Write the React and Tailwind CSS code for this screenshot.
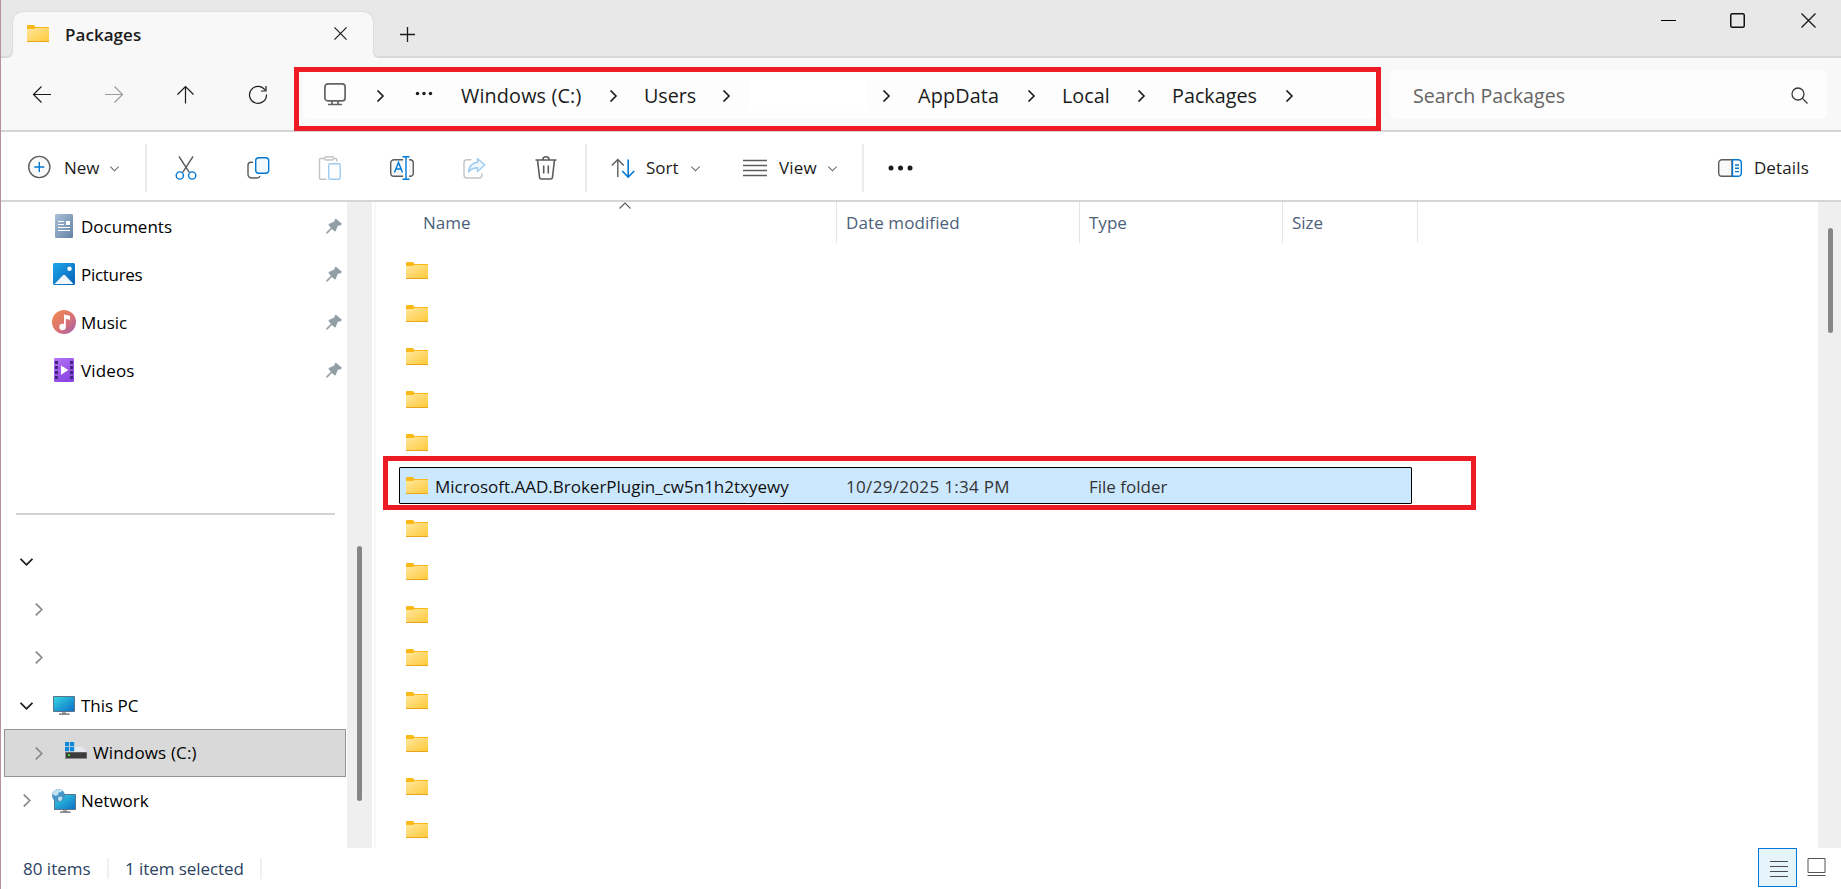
import React, { useState } from 'react'

const NAV_ICONS = [
  { id: 'back',    cls: 'text-[#1b1b1b]', d: 'M21 11.500H3.500M11.500 3.500 3.500 11.500l8 8' },
  { id: 'forward', cls: 'text-[#9b9b9b]', d: 'M3 11.500h17.500M12.500 3.500 20.500 11.500l-8 8' },
  { id: 'up',      cls: 'text-[#1b1b1b]', d: 'M11.500 20.500V3.500M3.500 11.500 11.500 3.500l8 8' },
  { id: 'refresh', cls: 'text-[#1b1b1b]', d: 'M19 7A8.500 8.500 0 1 0 20.500 11.500M20 3v5h-5' },
]

const PLACES = [
  { id: 'documents', label: 'Documents', Icon: DocumentsIcon, cls: 'tracking-normal' },
  { id: 'pictures',  label: 'Pictures',  Icon: PicturesIcon,  cls: 'tracking-[-0.300px]' },
  { id: 'music',     label: 'Music',     Icon: MusicIcon,     cls: 'tracking-normal' },
  { id: 'videos',    label: 'Videos',    Icon: VideosIcon,    cls: 'tracking-[0.150px]' },
]

const SELECTED = 5
const FILES = Array.from({ length: 14 }, (_, i) => (
  i === SELECTED
    ? { id: i, name: 'Microsoft.AAD.BrokerPlugin_cw5n1h2txyewy', modified: '10/29/2025 1:34 PM', type: 'File folder' }
    : { id: i, name: '', modified: '', type: '' }
))

function Chevron({ dir = 'right', size = 12, width = 1.6, className = '' }) {
  const paths = {
    right: 'M3.500 0.500 9 6 3.500 11.500',
    down:  'M0.500 3.500 6 9l5.500-5.500',
    up:    'M0.500 8.500 6 3l5.500 5.500',
  }
  return (
    <svg width={size} height={size} viewBox="0 0 12 12" fill="none" stroke="currentColor" strokeWidth={width} className={`shrink-0 ${className}`}>
      <path d={paths[dir]} />
    </svg>
  )
}

function Cross({ size }) {
  return (
    <svg width={size} height={size} viewBox="0 0 15 15" fill="none" stroke="#1b1b1b" strokeWidth="1.4">
      <path d="M0.500 0.500l14 14M14.500 0.500l-14 14" />
    </svg>
  )
}

function FolderIcon({ className = '' }) {
  return (
    <svg width="22" height="17" viewBox="0 0 22 17" className={`shrink-0 ${className}`}>
      <defs>
        <linearGradient id="folder" x1="0" y1="0" x2="1" y2="1">
          <stop offset="0" stopColor="#ffe79f" />
          <stop offset="1" stopColor="#ffca3a" />
        </linearGradient>
      </defs>
      <path d="M0 1a1 1 0 0 1 1-1h6l1.500 2H22v3H0z" fill="#fbb917" />
      <path d="M0 4h7l1.500-1H22v13H0z" fill="url(#folder)" />
      <path d="M0 16h22v.4a.6.6 0 0 1-.6.6H.6a.6.6 0 0 1-.6-.6z" fill="#e8a51d" />
    </svg>
  )
}

function DocumentsIcon() {
  return (
    <svg width="24" height="24" viewBox="0 0 24 24">
      <defs>
        <linearGradient id="doc" x1="0" y1="0" x2="1" y2="1">
          <stop offset="0" stopColor="#a9c0d8" />
          <stop offset="1" stopColor="#6483a5" />
        </linearGradient>
      </defs>
      <rect x="3" width="18" height="24" rx="1.300" fill="url(#doc)" />
      <path d="M6 7.500h6M6 10.500h6M6 13.500h12M6 16.500h12" stroke="#fff" strokeWidth="1" />
      <rect x="14" y="7" width="4" height="4" fill="#fff" />
    </svg>
  )
}

function PicturesIcon() {
  return (
    <svg width="24" height="24" viewBox="0 0 24 24">
      <defs>
        <linearGradient id="pic" x1="0" y1="0" x2="1" y2="1">
          <stop offset="0" stopColor="#1ea7ea" />
          <stop offset="1" stopColor="#0560b6" />
        </linearGradient>
      </defs>
      <rect x="1" y="1" width="22" height="22" rx="1.500" fill="url(#pic)" />
      <path d="M2.500 22 11 13.200a1.500 1.500 0 0 1 2.100 0L21.500 22z" fill="#f1f6fc" />
      <circle cx="17.500" cy="6.700" r="2.200" fill="#fff" />
    </svg>
  )
}

function MusicIcon() {
  return (
    <svg width="24" height="24" viewBox="0 0 24 24">
      <defs>
        <linearGradient id="music" x1="0" y1="0.100" x2="0.900" y2="1">
          <stop offset="0" stopColor="#f28a50" />
          <stop offset="0.550" stopColor="#d97272" />
          <stop offset="1" stopColor="#a862ae" />
        </linearGradient>
      </defs>
      <circle cx="12" cy="12" r="12" fill="url(#music)" />
      <path d="M12 4.500l6 1.300v4l-4.200-.9V17h-1.800z" fill="#fff" />
      <circle cx="10.500" cy="17" r="3.200" fill="#fff" />
    </svg>
  )
}

function VideosIcon() {
  return (
    <svg width="24" height="24" viewBox="0 0 24 24">
      <defs>
        <linearGradient id="video" x1="0" y1="0" x2="0.600" y2="1">
          <stop offset="0" stopColor="#b574f5" />
          <stop offset="1" stopColor="#8a44e2" />
        </linearGradient>
      </defs>
      <rect x="2" width="20" height="24" rx="1.300" fill="url(#video)" />
      {[3, 8, 13, 18].map((y) => (
        <g key={y} fill="#40277c">
          <rect x="3" y={y} width="3" height="3" />
          <rect x="18" y={y} width="3" height="3" />
        </g>
      ))}
      <path d="M9 7.500 16.300 12 9 16.800z" fill="#fff" />
    </svg>
  )
}

function Monitor() {
  return (
    <>
      <defs>
        <linearGradient id="screen" x1="0" y1="0" x2="1" y2="1">
          <stop offset="0" stopColor="#35d6e3" />
          <stop offset="1" stopColor="#0d6fc7" />
        </linearGradient>
      </defs>
      <rect x="0" y="0" width="22" height="16" rx="0.800" fill="#59748a" />
      <rect x="1" y="1" width="20" height="14" fill="url(#screen)" />
      <path d="M9 16h4v2H9z" fill="#a6acb0" />
      <path d="M6 17.500h10.500v1.200H6z" fill="#54595e" />
    </>
  )
}

function ThisPcIcon() {
  return (
    <svg width="24" height="24" viewBox="0 0 24 24">
      <g transform="translate(1 2)"><Monitor /></g>
    </svg>
  )
}

function NetworkIcon() {
  return (
    <svg width="24" height="24" viewBox="0 0 24 24">
      <g transform="translate(2 5)"><Monitor /></g>
      <circle cx="6.500" cy="6.500" r="6.500" fill="#4893c4" />
      <path d="M2 2c2.500-2.300 6-2.300 8.500-.8L9 3.500 7 3 6 6 3.500 7 .5 5zM6.500 7.500l4 .5-.8 3-2 1.500-1.700-2z" fill="#c2e2f1" />
    </svg>
  )
}

function DriveIcon() {
  return (
    <svg width="22" height="18" viewBox="0 0 22 18">
      <path d="M9 5h9l4 6H9z" fill="#e4e7ec" />
      <path d="M0 10h22v7H0z" fill="#8a8a8a" />
      <path d="M1 10.500h20.500V16H1z" fill="#3d3d3d" />
      <rect x="3" y="12" width="2" height="2" fill="#3ddc2c" />
      <path d="M0 0h4.200v4.200H0zM5 0h4.200v4.200H5zM0 5h4.200v4.200H0zM5 5h4.200v4.200H5z" fill="#1089dd" />
    </svg>
  )
}

function PinIcon() {
  return (
    <svg width="16" height="16" viewBox="0 0 16 16" fill="#929da4">
      <path d="M9.500.5 15.700 5.400 15 7.200 11.800 7.800 9.700 13.200 8.400 13.200 5.800 10.900 1.600 15.500H.3V14.300L4.900 9.700 2.700 7.200V6L8 3.800z" />
    </svg>
  )
}

function Stroke24({ children, width = 1.4, className = '' }) {
  return (
    <svg width="24" height="24" viewBox="0 0 24 24" fill="none" stroke="#5c5c5c" strokeWidth={width} className={`shrink-0 ${className}`}>
      {children}
    </svg>
  )
}

function TitleBar() {
  return (
    <header className="h-[58px] shrink-0 bg-[#f8f8f8]">
      <div className="flex h-[48px] bg-[#e8e8e8] pl-[11px]">
        <div className="mt-[11px] flex w-[362px] rounded-t-[11px] border-x border-t border-[#dedede] bg-[#f8f8f8] pl-[14px]">
          <FolderIcon className="mt-[13px]" />
          <span className="mt-[12px] ml-[16px] w-[78px] text-[17px] leading-[22px] font-semibold tracking-[0.050px] text-[#1b1b1b]">Packages</span>
          <button className="mt-[15px] ml-[191px] h-[13px] w-[13px]"><Cross size={13} /></button>
        </div>
        <button className="mt-[27px] ml-[26px] h-[15px] w-[15px]">
          <svg width="15" height="15" viewBox="0 0 15 15" stroke="#1b1b1b" strokeWidth="1.300">
            <path d="M0 7.500h15M7.500 0v15" />
          </svg>
        </button>
        <div className="ml-auto flex h-[41px] items-center">
          <button className="flex w-[61px] justify-center"><span className="h-px w-[15px] bg-black" /></button>
          <button className="flex w-[77px] justify-center">
            <svg width="15" height="15" viewBox="0 0 15 15" fill="none" stroke="#111" strokeWidth="1.500">
              <rect x="0.750" y="0.750" width="13.500" height="13.500" rx="1.500" />
            </svg>
          </button>
          <button className="flex w-[65px] justify-center"><Cross size={15} /></button>
        </div>
      </div>
      {/* foot of the tab, flaring into the bar below */}
      <div className="flex h-[10px]">
        <div className="w-[12px] rounded-br-[6px] border-r border-b-2 border-[#d9d9d9] bg-[#e8e8e8]" />
        <div className="w-[360px]" />
        <div className="flex-1 rounded-bl-[6px] border-b-2 border-l border-[#d9d9d9] bg-[#e8e8e8]" />
      </div>
    </header>
  )
}

function Crumbs() {
  return (
    <div className="relative flex h-[49px] w-[1074px] items-center rounded-[7px] bg-[#fdfdfd] pl-[21px] text-[19.800px] text-[#1b1b1b]">
      <svg width="22" height="23" viewBox="0 0 22 23" fill="none" stroke="#636363" strokeWidth="1.700" className="shrink-0">
        <rect x="0.900" y="0.900" width="20.200" height="17" rx="3" />
        <path d="M8 18v3.500M14 18v3.500M4 21.500h14" />
      </svg>
      <span className="flex w-[68px] justify-center pt-[2px]"><Chevron /></span>
      <svg width="20" height="5" viewBox="0 0 20 5" fill="#1b1b1b" className="-mt-[2px]">
        <circle cx="3.500" cy="2.500" r="1.700" /><circle cx="10" cy="2.500" r="1.700" /><circle cx="16.500" cy="2.500" r="1.700" />
      </svg>
      <span className="ml-[27px] w-[121px] pt-[2px] tracking-[0.150px] whitespace-nowrap">Windows (C:)</span>
      <span className="flex w-[62px] justify-center pt-[2px]"><Chevron /></span>
      <span className="w-[58px] pt-[2px] tracking-[-0.100px]">Users</span>
      <span className="flex w-[48px] justify-center pt-[2px]"><Chevron /></span>
      <span className="h-[32px] w-[116px] bg-white" />
      <span className="flex w-[39px] justify-center pt-[2px]"><Chevron /></span>
      <span className="ml-[13px] w-[81px] pt-[2px] tracking-[0.150px]">AppData</span>
      <span className="flex w-[63px] justify-center pt-[2px]"><Chevron /></span>
      <span className="w-[48px] pt-[2px]">Local</span>
      <span className="flex w-[62px] justify-center pt-[2px]"><Chevron /></span>
      <span className="w-[86px] pt-[2px]">Packages</span>
      <span className="flex w-[62px] justify-center pt-[2px]"><Chevron /></span>
      <div className="absolute -top-[3px] -left-[9px] h-[64px] w-[1087px] border-[5px] border-[#ed1c24]" />
    </div>
  )
}

function AddressBar() {
  return (
    <div className="flex h-[74px] shrink-0 items-start border-b-2 border-[#d5d5d5] bg-[#f8f8f8] pt-[12px] pl-[5px]">
      <nav className="flex h-[49px] items-center">
        {NAV_ICONS.map((n) => (
          <button key={n.id} className={`flex w-[72px] justify-center ${n.cls}`}>
            <svg width="24" height="24" viewBox="0 0 24 24" fill="none" stroke="currentColor" strokeWidth="1.200">
              <path d={n.d} />
            </svg>
          </button>
        ))}
      </nav>
      <div className="ml-[9px]"><Crumbs /></div>
      <div className="ml-[13px] flex h-[49px] w-[437px] items-center justify-between rounded-[7px] bg-[#fdfdfd] pt-[2px] pr-[19px] pl-[23px]">
        <span className="text-[19.600px] tracking-[0.050px] text-[#646464]">Search Packages</span>
        <svg width="17" height="17" viewBox="0 0 17 17" fill="none" stroke="#3a3a3a" strokeWidth="1.300">
          <circle cx="7" cy="7" r="6" /><path d="M11.400 11.400 16.500 16.500" />
        </svg>
      </div>
    </div>
  )
}

function Toolbar() {
  return (
    <div className="flex h-[70px] shrink-0 items-center border-b-2 border-[#d5d5d5] bg-white pt-[4px] text-[17px] text-[#1b1b1b]">
      <button className="flex w-[144px] items-center pl-[26px] text-left">
        <Stroke24 className="-mt-[2px]">
          <circle cx="12.300" cy="12" r="10.600" fill="#f9f9f9" />
          <path d="M12.300 7v10M7.300 12h10" stroke="#0078d4" />
        </Stroke24>
        <span className="ml-[13px] w-[46px]">New</span>
        <Chevron dir="down" size={9} width={1.4} className="text-[#666]" />
      </button>
      <div className="h-[48px] w-[2px] bg-[#ececec]" />

      <div className="flex w-[436px] pl-[3px]">
        <button className="flex w-[72px] justify-center">
          <Stroke24>
            <path d="M5 .5 15.300 16.300M19 .5 8.700 16.300" />
            <circle cx="5.800" cy="19.500" r="3.600" stroke="#0078d4" />
            <circle cx="18.200" cy="19.500" r="3.600" stroke="#0078d4" />
          </Stroke24>
        </button>
        <button className="flex w-[72px] justify-center">
          <Stroke24>
            <path d="M7 6.200H5a3 3 0 0 0-3 3v9.300a3.500 3.500 0 0 0 3.500 3.500H11a3 3 0 0 0 3-2" />
            <rect x="9.700" y="1.800" width="13" height="15.500" rx="3" stroke="#0078d4" fill="#f4f9fd" />
          </Stroke24>
        </button>
        <button className="flex w-[72px] justify-center">
          <Stroke24>
            <g stroke="#c3c3c3">
              <path d="M6.500 2.500H2.700a1.200 1.200 0 0 0-1.200 1.200V22a1.200 1.200 0 0 0 1.200 1.200H8.500M15.500 2.500h2a1.200 1.200 0 0 1 1.200 1.200v1.800" />
              <rect x="6.500" y="0.700" width="9" height="3.300" rx="1.600" />
            </g>
            <rect x="10.700" y="7.700" width="11.500" height="15.500" rx="1.500" stroke="#9ecbf0" />
          </Stroke24>
        </button>
        <button className="flex w-[72px] justify-center">
          <Stroke24>
            <path d="M13 3.700H4a3.300 3.300 0 0 0-3.300 3.300v10A3.300 3.300 0 0 0 4 20.300h9M19 3.700h1a3.300 3.300 0 0 1 3.300 3.300v10a3.300 3.300 0 0 1-3.300 3.300h-1" fill="#f6f6f6" />
            <path d="M4.500 16.500 8.500 6.500l4 10M5.900 13h5.200M16 .7v22.600M12.500.7h7M12.500 23.300h7" stroke="#0078d4" />
          </Stroke24>
        </button>
        <button className="flex w-[72px] justify-center">
          <Stroke24>
            <path d="M9.500 3.700H5A3 3 0 0 0 2 6.700V19a3 3 0 0 0 3 3H17a3 3 0 0 0 3-3v-1.500" stroke="#c3c3c3" />
            <path d="M15.500 2.500 22.800 9 15.500 15.500V11.800c-4 0-6.500 1.200-9 4.200C7 10.500 10 7 15.500 6.300z" stroke="#9ecbf0" fill="#eef7fe" strokeLinejoin="round" />
          </Stroke24>
        </button>
        <button className="flex w-[72px] justify-center">
          <Stroke24>
            <path d="M1.500 4h21M8.800 4a3.200 3.200 0 0 1 6.400 0M3.500 4l2 17a2 2 0 0 0 2 2h9a2 2 0 0 0 2-2l2-17M9.700 9.500v8M14.300 9.500v8" strokeWidth="1.600" />
          </Stroke24>
        </button>
      </div>

      <div className="ml-[2px] h-[48px] w-[2px] bg-[#ececec]" />
      <button className="ml-[24px] flex w-[132px] items-center text-left">
        <Stroke24 className="-mt-[1px]">
          <path d="M6.800 21V3.500M.8 9.500l6-6 6 6" />
          <path d="M17.200 3.500V21M11.200 15l6 6 6-6" stroke="#0078d4" strokeWidth="1.600" />
        </Stroke24>
        <span className="ml-[11px] w-[45px]">Sort</span>
        <Chevron dir="down" size={9} width={1.4} className="text-[#666]" />
      </button>
      <button className="flex w-[119px] items-center text-left">
        <Stroke24 className="-mt-[1px]">
          <path d="M0 4.500h24M0 9.500h24M0 14.500h24M0 19.500h24" />
        </Stroke24>
        <span className="ml-[12px] w-[49px] tracking-[0.200px]">View</span>
        <Chevron dir="down" size={9} width={1.4} className="text-[#666]" />
      </button>
      <div className="h-[48px] w-[2px] bg-[#ececec]" />
      <button className="ml-[24px]">
        <svg width="26" height="6" viewBox="0 0 26 6" fill="#1b1b1b">
          <circle cx="3" cy="3" r="2.500" /><circle cx="12.500" cy="3" r="2.500" /><circle cx="22" cy="3" r="2.500" />
        </svg>
      </button>
      <button className="mr-[32px] ml-auto flex items-center">
        <Stroke24>
          <path d="M14 3.700H4A3.300 3.300 0 0 0 .7 7v10A3.300 3.300 0 0 0 4 20.300h10z" fill="#f9f9f9" />
          <path d="M14.500 3.700H20A3.300 3.300 0 0 1 23.300 7v10a3.300 3.300 0 0 1-3.300 3.300h-5.500zM17 9h4M17 12.300h4M17 15.600h4" stroke="#0078d4" />
        </Stroke24>
        <span className="ml-[12px] tracking-[0.150px]">Details</span>
      </button>
    </div>
  )
}

function TreeRow({ dir, indent, Icon, label }) {
  return (
    <div className="flex h-[48px] items-center">
      <span className={`-mt-px flex w-[12px] shrink-0 justify-center ${indent ? 'ml-[31px]' : 'ml-[19px]'}`}>
        <Chevron dir={dir} size={13} width={1.6} className={dir === 'down' ? 'text-[#1b1b1b]' : 'text-[#8b8b8b]'} />
      </span>
      {Icon && <span className="-mt-px ml-[20px]"><Icon /></span>}
      {label && <span className="-mt-px ml-[5px]">{label}</span>}
    </div>
  )
}

function Sidebar() {
  return (
    <aside className="flex w-[375px] shrink-0 text-[17px] text-black">
      <div className="w-[346px] shrink-0">
        {PLACES.map(({ id, label, Icon, cls }) => (
          <div key={id} className="flex h-[48px] items-center pr-[5px] pl-[51px]">
            <Icon />
            <span className={`mt-px ml-[5px] ${cls}`}>{label}</span>
            <span className="ml-auto"><PinIcon /></span>
          </div>
        ))}
        <div className="mt-[119px] ml-[15px] h-[2px] w-[319px] bg-[#d3d3d3]" />
        <div className="mt-[23px]">
          <TreeRow dir="down" />
          <TreeRow dir="right" indent />
          <TreeRow dir="right" indent />
          <TreeRow dir="down" Icon={ThisPcIcon} label="This PC" />
          <div className="-mt-px ml-[3px] flex h-[48px] w-[342px] items-center border border-[#939393] bg-[#d9d9d9]">
            <span className="ml-[27px] flex w-[12px] justify-center"><Chevron size={13} className="text-[#8b8b8b]" /></span>
            <span className="-mt-[4px] ml-[21px]"><DriveIcon /></span>
            <span className="ml-[6px] tracking-[0.150px]">Windows (C:)</span>
          </div>
          <TreeRow dir="right" Icon={NetworkIcon} label="Network" />
        </div>
      </div>
      <div className="w-[25px] bg-[#efefef] pt-[344px] pl-[10px]">
        <div className="h-[255px] w-[5px] rounded-full bg-[#868686]" />
      </div>
      <div className="ml-[2px] w-[2px] bg-[#f7f7f7]" />
    </aside>
  )
}

function FileList({ selected, onSelect }) {
  return (
    <main className="flex flex-1 flex-col overflow-hidden text-[17px]">
      <div className="flex h-[41px] shrink-0 leading-[42px] text-[#4c607a]">
        <div className="relative w-[461px] border-r border-[#e5e5e5] pl-[47px]">
          Name
          <Chevron dir="up" size={12} width={1.1} className="absolute top-[-2px] left-[243px] text-[#5a5a5a]" />
        </div>
        <div className="w-[243px] border-r border-[#e5e5e5] pl-[9px] tracking-[0.100px]">Date modified</div>
        <div className="w-[203px] border-r border-[#e5e5e5] pl-[9px]">Type</div>
        <div className="w-[135px] border-r border-[#e5e5e5] pl-[9px]">Size</div>
      </div>
      <div className="mt-[6px] pl-[23px]">
        {FILES.map((f) => {
          const on = f.id === selected
          return (
            <div key={f.id} onClick={() => onSelect(f.id)} className="relative flex h-[43px] items-center">
              <div className={`flex h-[37px] w-[1013px] items-center rounded-[1px] border pl-[6px] ${on ? 'border-black bg-[#cce8ff]' : 'border-transparent'}`}>
                <FolderIcon />
                <span className="mt-[3px] ml-[7px] w-[411px] text-[#111]">{f.name}</span>
                <span className="mt-[3px] w-[243px] tracking-[0.320px] text-[#333]">{f.modified}</span>
                <span className="mt-[3px] text-[#333]">{f.type}</span>
              </div>
              {f.name && <div className="absolute -top-[8px] -left-[16px] h-[54px] w-[1093px] border-[5px] border-[#ed1c24]" />}
            </div>
          )
        })}
      </div>
    </main>
  )
}

function StatusBar() {
  return (
    <footer className="flex h-[41px] shrink-0 items-center bg-white pl-[22px] text-[17px] text-[#2b4262]">
      <span className="w-[84px]">80 items</span>
      <div className="h-[21px] w-[2px] bg-[#f0f0f0]" />
      <span className="ml-[16px] w-[135px] tracking-[-0.060px]">1 item selected</span>
      <div className="h-[21px] w-[2px] bg-[#f0f0f0]" />
      <div className="mr-[15px] ml-auto flex items-start gap-[10px] self-start">
        <button className="flex h-[39px] w-[39px] items-center justify-center border border-[#0078d7] bg-[#e5f3fb] pt-[4px] pl-[3px]">
          <svg width="18" height="17" viewBox="0 0 18 17" stroke="#4b4b4b" strokeWidth="1">
            <path d="M0 .5h18M0 5.500h18M0 10.500h18M0 15.500h18" />
          </svg>
        </button>
        <svg width="19" height="18" viewBox="0 0 19 18" fill="none" stroke="#555" className="mt-[10px]">
          <path d="M1 .5h17v14H1zM.5 17.500h18" />
        </svg>
      </div>
    </footer>
  )
}

export default function App() {
  const [selected, setSelected] = useState(SELECTED)

  return (
    <div className="flex h-screen w-full flex-col overflow-hidden border-l border-[#b78f9d] bg-white font-['Open_Sans',sans-serif]">
      <TitleBar />
      <AddressBar />
      <Toolbar />
      <div className="flex min-h-0 flex-1">
        <Sidebar />
        <FileList selected={selected} onSelect={setSelected} />
        <div className="w-[23px] shrink-0 bg-[#efefef] pt-[26px] pl-[10px]">
          <div className="h-[105px] w-[5px] rounded-full bg-[#868686]" />
        </div>
      </div>
      <StatusBar />
    </div>
  )
}
